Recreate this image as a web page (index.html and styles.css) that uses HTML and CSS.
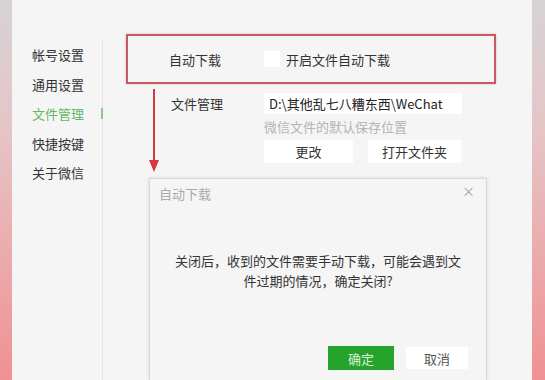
FILE: index.html
```html
<!DOCTYPE html>
<html lang="zh-CN">
<head>
    <meta charset="UTF-8">
    <title>设置 - 文件管理</title>
    <link rel="stylesheet" href="styles.css">
</head>
<body>
    <div class="edge"></div>

    <div class="window">
        <ul class="sidebar">
            <li>帐号设置</li>
            <li>通用设置</li>
            <li class="active">文件管理</li>
            <li>快捷按键</li>
            <li>关于微信</li>
        </ul>

        <div class="main">
            <div class="highlight">
                <span class="label">自动下载</span>
                <span class="checkbox"></span>
                <span class="check-text">开启文件自动下载</span>
            </div>

            <div class="row">
                <span class="label">文件管理</span>
                <div class="col">
                    <div class="path">D:\其他乱七八糟东西\WeChat</div>
                    <div class="hint">微信文件的默认保存位置</div>
                    <div class="btns">
                        <button class="btn btn-change">更改</button>
                        <button class="btn btn-open">打开文件夹</button>
                    </div>
                </div>
            </div>
        </div>

        <!-- annotation arrow -->
        <div class="arrow"></div>

        <div class="dialog">
            <div class="dialog-head">
                <span class="dialog-title">自动下载</span>
                <span class="dialog-close">&times;</span>
            </div>
            <p class="dialog-msg">关闭后，收到的文件需要手动下载，可能会遇到文件过期的情况，确定关闭?</p>
            <div class="dialog-btns">
                <button class="btn-ok">确定</button>
                <button class="btn-cancel">取消</button>
            </div>
        </div>
    </div>

    <div class="edge edge-right"></div>
</body>
</html>
```

FILE: styles.css
```css
html, body { margin: 0; height: 100%; }
body {
    display: flex; width: 545px; height: 380px; overflow: hidden;
    font-family: "Noto Sans CJK SC", "Noto Sans", sans-serif; font-size: 13px; color: #333;
}
.edge { width: 12px; flex: none; background: linear-gradient(#d6d3d5, #e6c4c6 35%, #f09192); }
.edge-right { width: 13px; }

.window { position: relative; flex: 1; display: flex; background: #f5f5f5; overflow: hidden; }

.sidebar {
    list-style: none; margin: 40px 0 0; padding: 0 0 0 20px;
    width: 70px; border-right: 1px solid #e4e4e4; position: relative;
}
.sidebar li { line-height: 29.5px; white-space: nowrap; color: #333; }
.sidebar li.active { color: #62b862; position: relative; }
.sidebar li.active::after {
    content: ""; position: absolute; right: -1px; top: 9px;
    width: 2px; height: 11px; background: #8cc98c;
}

.main { display: flex; flex-direction: column; padding: 34px 0 0 23px; }

.highlight {
    width: 325px; height: 46px; border: 2px solid #c65a60;
    display: flex; align-items: center; padding-left: 41px;
    box-shadow: 0 0 2px rgba(200, 80, 90, 0.4);
}
.label { width: 95px; flex: none; }
.checkbox { width: 16px; height: 16px; background: #fff; flex: none; }
.check-text { margin-left: 6px; }

.row { display: flex; margin-top: 9px; padding-left: 45px; }
.row .label { width: 93px; line-height: 21px; }
.col { display: flex; flex-direction: column; }
.path {
    width: 193px; height: 21px; line-height: 21px; padding-left: 5px;
    background: #fff; color: #222; white-space: nowrap; overflow: hidden;
}
.hint { margin-top: 3px; line-height: 20px; color: #b4b4b4; }
.btns { display: flex; gap: 15px; margin-top: 3px; }
.btn {
    height: 23px; border: none; background: #fff; color: #333; padding: 0;
    font-family: inherit; font-size: 13px;
}
.btn-change { width: 89px; }
.btn-open { width: 93px; }

.arrow {
    position: absolute; left: 141px; top: 89px;
    width: 2px; height: 72px; background: #d3393f;
}
.arrow::after {
    content: ""; position: absolute; left: -4px; bottom: -11px;
    border-left: 5px solid transparent; border-right: 5px solid transparent;
    border-top: 12px solid #d3393f;
}

.dialog {
    position: absolute; left: 137px; top: 178px;
    width: 336px; height: 201px; background: #f5f5f5;
    border: 1px solid #dadada; border-bottom: none;
    box-shadow: 0 0 4px rgba(0, 0, 0, 0.12);
}
.dialog-head {
    display: flex; justify-content: space-between; align-items: center;
    padding: 5px 11px 0 9px; line-height: 20px;
}
.dialog-title { color: #a9a9a9; }
.dialog-close { color: #a0a0a0; font-size: 13px; margin-top: -6px; }
.dialog-msg {
    width: 292px; margin: 47px auto 0; line-height: 20px;
    text-align: center; color: #333;
}
.dialog-btns { display: flex; justify-content: flex-end; align-items: center; gap: 12px; margin-top: 55px; padding-right: 18px; }
.btn-ok, .btn-cancel { border: none; padding: 0; font-family: inherit; font-size: 13px; }
.btn-ok { width: 66px; height: 24px; background: #25a32a; color: #d9f2d9; }
.btn-cancel { width: 62px; height: 22px; background: #fff; color: #555; }
```
